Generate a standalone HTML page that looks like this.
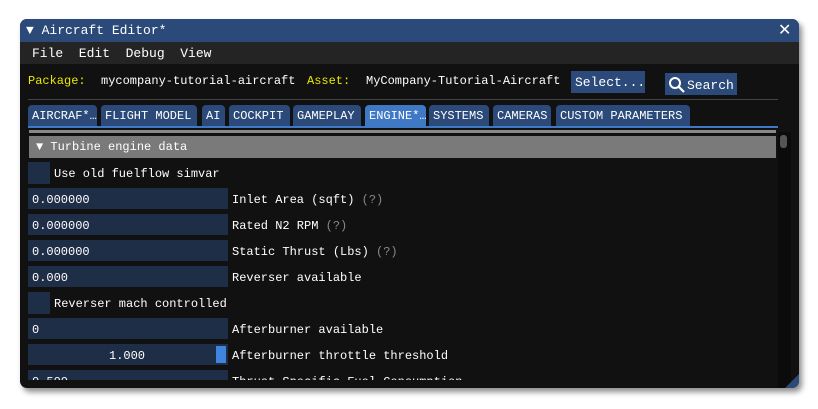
<!DOCTYPE html><html><head><style>
*{margin:0;padding:0;box-sizing:border-box}
body{width:818px;height:409px;background:#fff;position:relative;overflow:hidden;font-family:"Liberation Mono",monospace;font-size:12px;color:#fff}
.win{position:absolute;left:20px;top:19px;width:779px;height:369px;background:#111;border-radius:7px;overflow:hidden;box-shadow:3px 4px 6px rgba(0,0,0,.45)}
.a{position:absolute;white-space:pre}
.title{left:0;top:0;width:779px;height:23px;background:#2b4a7a}
.menu{left:0;top:23px;width:779px;height:22px;background:#242424}
.inp{position:absolute;left:8px;width:200px;height:21px;background:#1f2e47}
.cb{position:absolute;left:8px;width:22px;height:22px;background:#1f2e47}
.tab{position:absolute;top:86px;height:21px;background:#2b4a7a;border-radius:4px 4px 0 0;padding:4px 4px 0}
.lbl{position:absolute;left:212px}
.g{color:#888}
.y{color:#e8e800}
</style></head><body>
<div class="win">
<div class="a title"></div>
<div class="a" style="left:6px;top:4px;font-size:13px">▼ Aircraft Editor*</div>
<div class="a" style="left:758px;top:1px;font-size:16px;font-family:'DejaVu Sans',sans-serif">✕</div>
<div class="a menu"></div>
<div class="a" style="left:12px;top:27px;font-size:13px">File  Edit  Debug  View</div>
<div class="a y" style="left:8px;top:55px">Package:</div>
<div class="a" style="left:81px;top:55px">mycompany-tutorial-aircraft</div>
<div class="a y" style="left:287px;top:55px">Asset:</div>
<div class="a" style="left:346px;top:55px">MyCompany-Tutorial-Aircraft</div>
<div class="a" style="left:551px;top:52px;width:74px;height:22px;background:#2b4a7a;padding:4px 0 0 4px;font-size:13px">Select...</div>
<div class="a" style="left:645px;top:54px;width:72px;height:22px;background:#2b4a7a;padding:5px 0 0 22px;font-size:13px">Search</div>
<svg class="a" style="left:648px;top:57px" width="18" height="18"><circle cx="7" cy="7" r="5" stroke="#fff" stroke-width="2" fill="none"/><line x1="11" y1="11" x2="16" y2="16" stroke="#fff" stroke-width="2.2"/></svg>
<div class="a" style="left:8px;top:80px;width:750px;height:1px;background:#444"></div>
<div class="tab" style="left:8px;width:69px">AIRCRAF*…</div>
<div class="tab" style="left:81px;width:96px">FLIGHT MODEL</div>
<div class="tab" style="left:182px;width:23px">AI</div>
<div class="tab" style="left:209px;width:61px">COCKPIT</div>
<div class="tab" style="left:273px;width:68px">GAMEPLAY</div>
<div class="tab" style="left:345px;width:61px;background:#3f78c4">ENGINE*…</div>
<div class="tab" style="left:409px;width:60px">SYSTEMS</div>
<div class="tab" style="left:473px;width:58px">CAMERAS</div>
<div class="tab" style="left:536px;width:134px">CUSTOM PARAMETERS</div>
<div class="a" style="left:8px;top:107px;width:750px;height:2px;background:#3f78c4"></div>
<div class="a" style="left:9px;top:111px;width:747px;height:3px;background:#888"></div>
<div class="a" style="left:758px;top:113px;width:13px;height:256px;background:#0b0b0b"></div>
<div class="a" style="left:760px;top:116px;width:7px;height:13px;background:#555;border-radius:3px"></div>
<div class="a" style="left:9px;top:117px;width:747px;height:22px;background:#7a7a7a;padding:4px 0 0 7px">▼ Turbine engine data</div>
<div class="cb" style="top:143px"></div><div class="a" style="left:34px;top:148px">Use old fuelflow simvar</div>
<div class="inp" style="top:169px"></div><div class="a" style="left:12px;top:174px">0.000000</div><div class="lbl a" style="top:174px">Inlet Area (sqft) <span class="g">(?)</span></div>
<div class="inp" style="top:195px"></div><div class="a" style="left:12px;top:200px">0.000000</div><div class="lbl a" style="top:200px">Rated N2 RPM <span class="g">(?)</span></div>
<div class="inp" style="top:221px"></div><div class="a" style="left:12px;top:226px">0.000000</div><div class="lbl a" style="top:226px">Static Thrust (Lbs) <span class="g">(?)</span></div>
<div class="inp" style="top:247px"></div><div class="a" style="left:12px;top:252px">0.000</div><div class="lbl a" style="top:252px">Reverser available</div>
<div class="cb" style="top:273px"></div><div class="a" style="left:34px;top:278px">Reverser mach controlled</div>
<div class="inp" style="top:299px"></div><div class="a" style="left:12px;top:304px">0</div><div class="lbl a" style="top:304px">Afterburner available</div>
<div class="inp" style="top:325px"></div><div class="a" style="left:89px;top:330px">1.000</div><div class="a" style="left:196px;top:327px;width:10px;height:17px;background:#3f85e0"></div><div class="lbl a" style="top:330px">Afterburner throttle threshold</div>
<div class="inp" style="top:351px"></div><div class="a" style="left:12px;top:356px">0.500</div><div class="lbl a" style="top:356px">Thrust Specific Fuel Consumption</div>
<div class="a" style="left:8px;top:361px;width:750px;height:8px;background:#111"></div>
<svg class="a" style="left:765px;top:355px" width="14" height="14"><path d="M14 0 L14 14 L0 14 Z" fill="#2b4a7a"/></svg>
</div>
</body></html>
